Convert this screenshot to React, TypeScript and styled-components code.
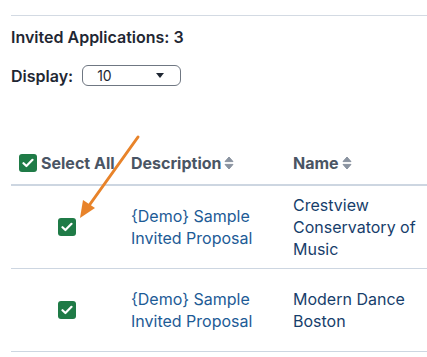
import styled, { createGlobalStyle } from "styled-components";

const GlobalStyle = createGlobalStyle`
  html, body {
    margin: 0;
    padding: 0;
    background: #ffffff;
    overflow: hidden;
  }
  body {
    font-family: Inter, "Noto Sans", "Liberation Sans", sans-serif;
    color: #1f2733;
  }
`;

type Application = {
  description: string[];
  name: string[];
};

const applications: Application[] = [
  {
    description: ["{Demo} Sample", "Invited Proposal"],
    name: ["Crestview", "Conservatory of", "Music"],
  },
  {
    description: ["{Demo} Sample", "Invited Proposal"],
    name: ["Modern Dance", "Boston"],
  },
];

function CheckIcon() {
  return (
    <CheckBox>
      <svg width="12" height="10" viewBox="0 0 12 10">
        <path
          d="M1.5 5.2 L4.4 8 L10.5 1.8"
          fill="none"
          stroke="#ffffff"
          strokeWidth="2.2"
          strokeLinecap="round"
          strokeLinejoin="round"
        />
      </svg>
    </CheckBox>
  );
}

function SortIcon() {
  return (
    <SortSvg width="10" height="14" viewBox="0 0 10 14">
      <path
        d="M5 1 L9 5.6 L1 5.6 Z"
        fill="#8a93a0"
        stroke="#8a93a0"
        strokeWidth="1"
        strokeLinejoin="round"
      />
      <path
        d="M5 13 L9 8.4 L1 8.4 Z"
        fill="#8a93a0"
        stroke="#8a93a0"
        strokeWidth="1"
        strokeLinejoin="round"
      />
    </SortSvg>
  );
}

export default function App() {
  return (
    <>
      <GlobalStyle />
      <Page>
        <Title>Invited Applications: 3</Title>
        <DisplayRow>
          <Label>Display:</Label>
          <Select>
            <span>10</span>
            <Caret />
          </Select>
        </DisplayRow>
        <TableWrap>
          <Table>
            <thead>
              <tr>
                <HeadCell $width={104}>
                  <HeadInner>
                    <CheckIcon />
                    <span>Select All</span>
                  </HeadInner>
                </HeadCell>
                <HeadCell $width={154}>
                  <HeadInner $tight>
                    <span>Description</span>
                    <SortIcon />
                  </HeadInner>
                </HeadCell>
                <HeadCell>
                  <HeadInner $tight>
                    <span>Name</span>
                    <SortIcon />
                  </HeadInner>
                </HeadCell>
              </tr>
            </thead>
            <tbody>
              {applications.map((app, i) => (
                <tr key={i}>
                  <Cell $center>
                    <CheckWrap>
                      <CheckIcon />
                    </CheckWrap>
                  </Cell>
                  <Cell $pad>
                    <LinkText>
                      {app.description.map((l) => (
                        <div key={l}>{l}</div>
                      ))}
                    </LinkText>
                  </Cell>
                  <Cell $pad>
                    <NameText>
                      {app.name.map((l) => (
                        <div key={l}>{l}</div>
                      ))}
                    </NameText>
                  </Cell>
                </tr>
              ))}
            </tbody>
          </Table>
          <Arrow width="80" height="100" viewBox="0 0 80 100">
            <line
              x1="67"
              y1="3"
              x2="17"
              y2="73"
              stroke="#e8832a"
              strokeWidth="3"
              strokeLinecap="round"
            />
            <path d="M9 84 L12 66 L24 74 Z" fill="#e8832a" />
          </Arrow>
        </TableWrap>
      </Page>
    </>
  );
}

const Page = styled.div`
  width: 520px;
  margin-top: 15px;
  margin-left: 11px;
  border-top: 1px solid #d3dae3;
`;

const Title = styled.div`
  margin-top: 11px;
  font-size: 16px;
  line-height: 20px;
  font-weight: 600;
  color: #1f2733;
`;

const DisplayRow = styled.div`
  display: flex;
  align-items: center;
  margin-top: 18px;
  gap: 9px;
`;

const Label = styled.span`
  font-size: 16px;
  line-height: 20px;
  font-weight: 600;
  color: #1f2733;
`;

const Select = styled.div`
  box-sizing: border-box;
  width: 99px;
  height: 21px;
  border: 1px solid #6f7782;
  border-radius: 6px;
  display: flex;
  align-items: center;
  justify-content: space-between;
  padding: 0 16px 0 14px;
  font-size: 14px;
  color: #1f2733;
`;

const Caret = styled.span`
  width: 0;
  height: 0;
  border-left: 4.5px solid transparent;
  border-right: 4.5px solid transparent;
  border-top: 5px solid #1f2733;
`;

const TableWrap = styled.div`
  position: relative;
  margin-top: 56px;
`;

const Table = styled.table`
  width: 100%;
  border-collapse: collapse;
  table-layout: fixed;
`;

const HeadCell = styled.th<{ $width?: number }>`
  width: ${(p) => (p.$width ? `${p.$width}px` : "auto")};
  padding: 10px 0 10px 8px;
  border-bottom: 2px solid #cdd6e1;
  text-align: left;
  font-size: 16px;
  line-height: 22px;
  font-weight: 700;
  color: #4a5564;
`;

const HeadInner = styled.div<{ $tight?: boolean }>`
  display: flex;
  align-items: center;
  gap: ${(p) => (p.$tight ? "3px" : "4px")};
`;

const SortSvg = styled.svg`
  display: block;
`;

const CheckBox = styled.span`
  width: 18px;
  height: 18px;
  border-radius: 3px;
  background: #1f7b47;
  display: inline-flex;
  align-items: center;
  justify-content: center;
  flex-shrink: 0;
`;

const CheckWrap = styled.div`
  display: flex;
  justify-content: center;
`;

const Cell = styled.td<{ $center?: boolean; $pad?: boolean }>`
  height: 66px;
  padding: 8px 0 8px ${(p) => (p.$pad ? "8px" : "0")};
  border-bottom: 1px solid #cdd6e1;
  vertical-align: middle;
  font-size: 16px;
  line-height: 22px;
  text-align: ${(p) => (p.$center ? "center" : "left")};
`;

const LinkText = styled.div`
  color: #1d5b96;
`;

const NameText = styled.div`
  color: #173e6b;
`;

const Arrow = styled.svg`
  position: absolute;
  left: 60px;
  top: -8px;
  pointer-events: none;
`;
